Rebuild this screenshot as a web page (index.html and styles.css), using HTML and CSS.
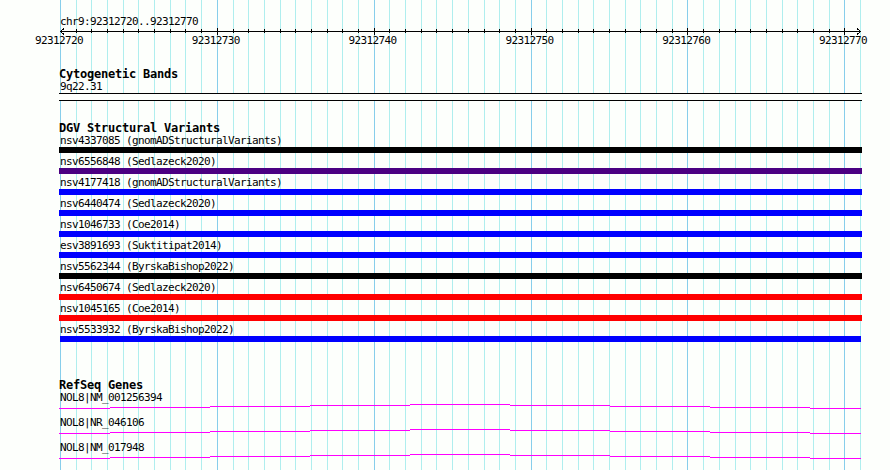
FILE: index.html
```
<!DOCTYPE html>
<html lang="en">
<head>
<meta charset="utf-8">
<title>chr9:92312720..92312770</title>
<link rel="stylesheet" href="styles.css">
</head>
<body>
<main class="browser">
  <svg class="grid" id="grid" width="890" height="470" aria-hidden="true"><path class="minor"/><path class="major"/></svg>
  <header class="scale">
    <div class="label">chr9:92312720..92312770</div>
    <svg class="axis" id="axis" width="803" height="7" aria-hidden="true"><path class="line" d="M1 3.5H802M5 0.5L1.5 3.5L5 6.5M798 0.5L801.5 3.5L798 6.5"/><path class="ticks"/></svg>
    <div class="numbers"><span>92312720</span><span>92312730</span><span>92312740</span><span>92312750</span><span>92312760</span><span>92312770</span></div>
  </header>
  <section class="track cytobands">
    <h2>Cytogenetic Bands</h2>
    <div class="label">9q22.31</div>
    <div class="band"></div>
  </section>
  <section class="track variants">
    <h2>DGV Structural Variants</h2>
    <div class="variant"><div class="label">nsv4337085 (gnomADStructuralVariants)</div><div class="bar black"></div></div>
    <div class="variant"><div class="label">nsv6556848 (Sedlazeck2020)</div><div class="bar indigo"></div></div>
    <div class="variant"><div class="label">nsv4177418 (gnomADStructuralVariants)</div><div class="bar blue"></div></div>
    <div class="variant"><div class="label">nsv6440474 (Sedlazeck2020)</div><div class="bar blue"></div></div>
    <div class="variant"><div class="label">nsv1046733 (Coe2014)</div><div class="bar blue"></div></div>
    <div class="variant"><div class="label">esv3891693 (Suktitipat2014)</div><div class="bar blue"></div></div>
    <div class="variant"><div class="label">nsv5562344 (ByrskaBishop2022)</div><div class="bar black"></div></div>
    <div class="variant"><div class="label">nsv6450674 (Sedlazeck2020)</div><div class="bar red"></div></div>
    <div class="variant"><div class="label">nsv1045165 (Coe2014)</div><div class="bar red"></div></div>
    <div class="variant"><div class="label">nsv5533932 (ByrskaBishop2022)</div><div class="bar blue inset"></div></div>
  </section>
  <section class="track genes">
    <h2>RefSeq Genes</h2>
    <div class="gene"><div class="label">NOL8|NM_001256394</div><svg class="intron" width="803" height="5"><path d="M0 4.5H51M51 3.5H151M151 2.5H251M251 1.5H351M351 0.5H451M451 1.5H551M551 2.5H651M651 3.5H751M751 4.5H802"/></svg></div>
    <div class="gene"><div class="label">NOL8|NR_046106</div><svg class="intron" width="803" height="5"><path d="M0 4.5H51M51 3.5H151M151 2.5H251M251 1.5H351M351 0.5H451M451 1.5H551M551 2.5H651M651 3.5H751M751 4.5H802"/></svg></div>
    <div class="gene"><div class="label">NOL8|NM_017948</div><svg class="intron" width="803" height="5"><path d="M0 4.5H51M51 3.5H151M151 2.5H251M251 1.5H351M351 0.5H451M451 1.5H551M551 2.5H651M651 3.5H751M751 4.5H802"/></svg></div>
  </section>
</main>
<script src="grid.js"></script>
</body>
</html>
```
FILE: grid.js
```
// 51 bases span 800 pixels; every tenth base is a major line.
let minor = '', major = '', ticks = '';
for (let i = 0; i <= 51; i++) {
  const x = Math.round(i * 800 / 51) + 0.5;
  const isMajor = i % 10 === 0;
  const line = `M${x + 60} 0V470`;
  if (isMajor) major += line; else minor += line;
  if (i > 0 && i < 51) ticks += isMajor ? `M${x + 1} 0V7` : `M${x + 1} 1V5`;
}
document.querySelector('.minor').setAttribute('d', minor);
document.querySelector('.major').setAttribute('d', major);
document.querySelector('.ticks').setAttribute('d', ticks);
```
FILE: styles.css
```
body {
  margin: 0;
  background: #fdfffc;
  color: #000;
  font-family: "DejaVu Sans Mono", monospace;
}
.browser {
  position: relative;
  box-sizing: border-box;
  width: 890px;
  height: 470px;
  padding: 15px 28px 0 59px;
  overflow: hidden;
}
svg {
  display: block;
  fill: none;
  shape-rendering: crispEdges;
}
.grid {
  position: absolute;
  inset: 0;
  z-index: -1;
}
.minor { stroke: #afeeee; }
.major { stroke: #87ceeb; }
.line { stroke: #000; }
.ticks { stroke: #000; }
.label, .numbers {
  font-size: 11px;
  line-height: 13px;
  letter-spacing: -0.622px;
  white-space: pre;
}
.label {
  height: 13px;
  padding-left: 1px;
}
.numbers {
  display: flex;
  justify-content: space-between;
  width: 832px;
  margin: -1px 0 0 -24px;
}
.numbers span { width: 48px; }
h2 {
  height: 13px;
  margin: 0;
  font-size: 12px;
  line-height: 15px;
  font-weight: bold;
  letter-spacing: -0.224px;
  white-space: pre;
}
.cytobands { margin-top: 20px; }
.band {
  box-sizing: border-box;
  height: 8px;
  background: #fdfffc;
  border: solid #000;
  border-width: 1px 0;
}
.variants { margin-top: 20px; }
.variant { margin-bottom: 2px; }
.bar { height: 6px; }
.black { background: #000; }
.indigo { background: #4b0082; }
.blue { background: #00f; }
.red { background: #f00; }
.inset { margin: 0 1px; }
.genes { margin-top: 36px; }
.gene { margin-bottom: 7px; }
.intron { stroke: #f0f; }
```
